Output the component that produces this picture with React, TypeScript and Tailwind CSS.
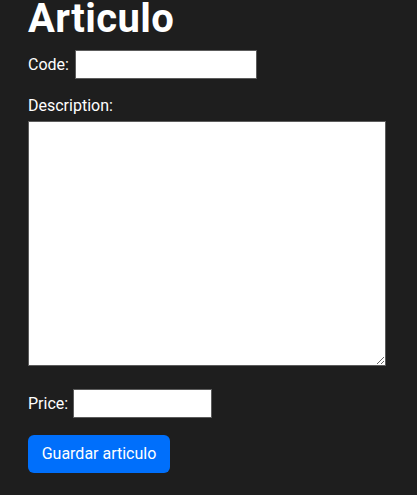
export default function App() {
  return (
    <div className="min-h-screen overflow-hidden bg-[#1e1e1e] pl-[28px] text-white font-['Roboto',_'Liberation_Sans',_sans-serif]">
      <h1 className="text-[40px] font-bold leading-[38px] tracking-[0.4px]">Articulo</h1>

      <div className="mt-[12px] flex items-center gap-[6px] text-[16px] leading-[24px]">
        <label htmlFor="code">Code:</label>
        <input id="code" type="text" className="h-[29px] w-[182px] border border-[#5c5c5c] bg-white text-black" />
      </div>

      <label htmlFor="desc" className="mt-[15px] block text-[16px] leading-[24px]">
        Description:
      </label>
      <textarea
        id="desc"
        className="mt-[3px] block h-[245px] w-[358px] resize border border-[#5c5c5c] bg-white text-black"
      />

      <div className="mt-[23px] flex items-center gap-[5px] text-[16px] leading-[24px]">
        <label htmlFor="price">Price:</label>
        <input id="price" type="text" className="h-[29px] w-[139px] border border-[#5c5c5c] bg-white text-black" />
      </div>

      <button
        type="button"
        className="mt-[17px] h-[38px] w-[142px] rounded-[6px] bg-[#006ffb] text-[16px] leading-[24px] text-white"
      >
        Guardar articulo
      </button>
    </div>
  );
}
